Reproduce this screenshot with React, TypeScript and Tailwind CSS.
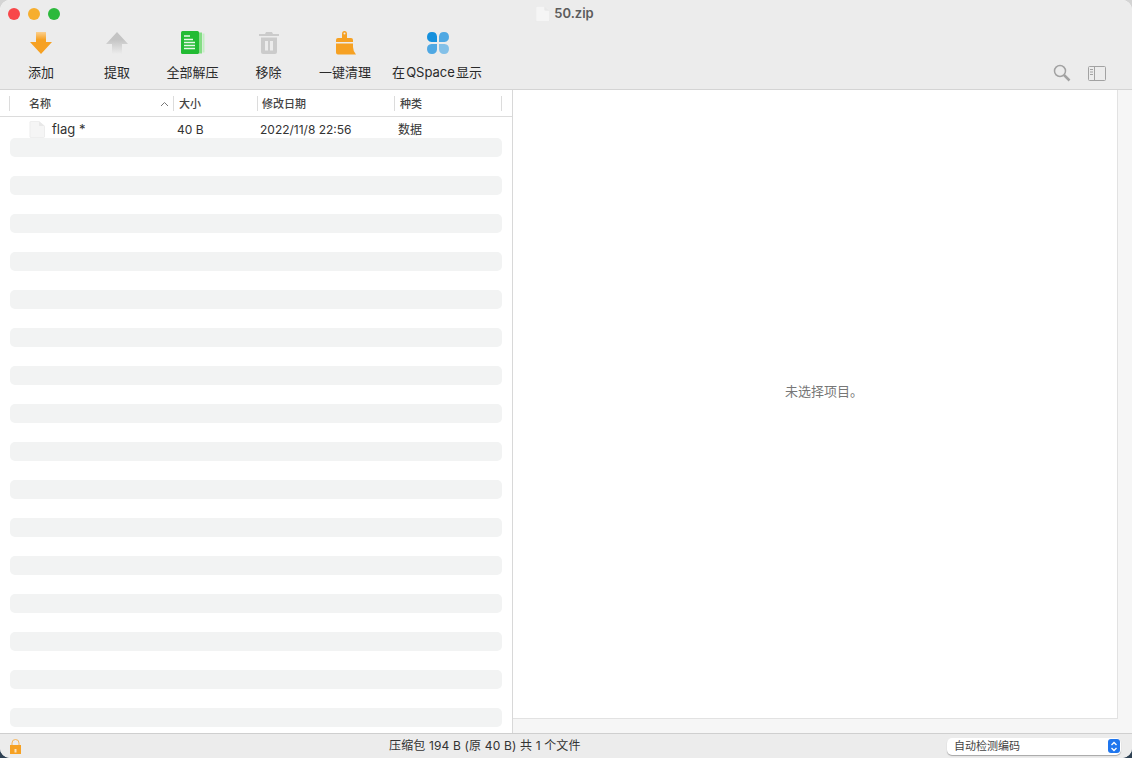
import React from 'react'

const font = { fontFamily: '"Inter", "Noto Sans CJK SC", sans-serif' }

const FileIcon = ({ className }: { className: string }) => (
  <svg className={className} viewBox="0 0 16 20" preserveAspectRatio="none">
    <path d="M1 1.500Q1 .5 2 .5H10L15.500 6V18.500Q15.500 19.500 14.500 19.500H2Q1 19.500 1 18.500Z" fill="#f5f5f5" stroke="#ebebeb" />
    <path d="M10 .5V5Q10 6 11 6H15.500Z" fill="#e8e8e8" />
  </svg>
)

const tools = [
  {
    label: '添加',
    width: 'w-[76px]',
    icon: (
      <svg className="w-6 h-6" viewBox="0 0 24 24">
        <defs>
          <linearGradient id="add" x1="0" y1="0" x2="0" y2="1">
            <stop offset="0" stopColor="#fbd08f" />
            <stop offset="0.35" stopColor="#f6a123" />
          </linearGradient>
        </defs>
        <path d="M7 1H17V11H23L12 23 1 11H7Z" fill="url(#add)" />
      </svg>
    ),
  },
  {
    label: '提取',
    width: 'w-[76px]',
    icon: (
      <svg className="w-6 h-6" viewBox="0 0 24 24">
        <defs>
          <linearGradient id="extract" x1="0" y1="0" x2="0" y2="1">
            <stop offset="0.35" stopColor="#c4c4c4" />
            <stop offset="1" stopColor="#ececec" />
          </linearGradient>
        </defs>
        <path d="M12 1 23 13H17V23H7V13H1Z" fill="url(#extract)" />
      </svg>
    ),
  },
  {
    label: '全部解压',
    width: 'w-[75px]',
    icon: (
      <svg className="w-6 h-6" viewBox="0 0 24 24">
        <rect x="21.500" y="2.500" width="2" height="19" fill="#c3eec3" />
        <rect x="18" y="1.500" width="3" height="21" fill="#84dd84" />
        <rect x="0" y="0" width="18" height="23" rx="1.500" fill="#22bb33" />
        <path d="M3 5H9M3 8.500H12M3 11.500H14M3 14.500H14M3 17.500H14" stroke="#e8f8e8" strokeWidth="1.500" />
      </svg>
    ),
  },
  {
    label: '移除',
    width: 'w-[77px]',
    icon: (
      <svg className="w-6 h-6" viewBox="0 0 24 24">
        <path d="M9 1H15L16 3H22V5H2V3H8Z" fill="#cbcbcb" />
        <path fillRule="evenodd" d="M4 6.500H20V21Q20 23 18 23H6Q4 23 4 21ZM8 10V19.500H11V10ZM13 10V19.500H16V10Z" fill="#cbcbcb" />
      </svg>
    ),
  },
  {
    label: '一键清理',
    width: 'w-[76px]',
    icon: (
      <svg className="w-6 h-6" viewBox="0 0 24 24">
        <path fillRule="evenodd" d="M9 3Q9 0 11.500 0T14 3V7H18Q20 7 20 9V11H3V9Q3 7 5 7H9ZM10.500 2.500A1 1 0 0 0 12.500 2.500A1 1 0 0 0 10.500 2.500Z" fill="#f6a123" />
        <path d="M3 12.500H20V16Q20 20 23 23.500H5Q3 23.500 3 21.500Z" fill="#f6a123" />
      </svg>
    ),
  },
  {
    label: '在 QSpace 显示',
    width: 'w-[108px]',
    icon: (
      <svg className="w-6 h-6 translate-x-[1px]" viewBox="0 0 24 24">
        <path d="M11 11H5.500A5 5 0 1 1 11 5.500Z" fill="#1590dd" />
        <path d="M13 11H18.500A5 5 0 1 0 13 5.500Z" fill="#4fa8e3" />
        <path d="M11 13H5.500A5 5 0 1 0 11 18.500Z" fill="#4fa8e3" />
        <path d="M13 13H18.500A5 5 0 1 1 13 18.500Z" fill="#83c0e8" />
      </svg>
    ),
  },
]

export default function App() {
  return (
    <div className="w-[1132px] h-[758px] bg-linear-to-b from-[#d4d4d4] from-50% to-[#2f4254] to-50% overflow-hidden" style={font}>
      <div className="h-full flex flex-col rounded-[10px] overflow-hidden bg-white">
        {/* title bar and toolbar */}
        <div className="h-[90px] shrink-0 bg-[#ececec] border-b border-[#d4d4d4]">
          <div className="h-[28px] relative flex items-center justify-center pr-[3px]">
            <div className="absolute left-2 top-2 flex gap-2">
              <span className="w-3 h-3 rounded-full bg-[#f8474a]" />
              <span className="w-3 h-3 rounded-full bg-[#f6ae2e]" />
              <span className="w-3 h-3 rounded-full bg-[#2cb93c]" />
            </div>
            <div className="flex items-center gap-[4px] text-[13px] font-semibold text-[#5c5c5c]">
              <FileIcon className="w-[15px] h-[16px]" />
              <span>50.zip</span>
            </div>
          </div>
          <div className="flex items-start pl-[3px] pr-[26px] h-[61px]">
            {tools.map(t => (
              <div key={t.label} className={`${t.width} flex flex-col items-center pt-[3px]`}>
                {t.icon}
                <span className="mt-[8px] text-[13px] leading-[18px] text-[#2a2a2a] whitespace-nowrap [word-spacing:-2.5px]">{t.label}</span>
              </div>
            ))}
            <div className="ml-auto flex items-center gap-[17px] pt-[36px]">
              <svg className="w-[18px] h-[18px]" viewBox="0 0 18 18" fill="none" stroke="#a2a2a2">
                <circle cx="7" cy="7" r="5.500" strokeWidth="1.500" />
                <path d="M11 11 16.500 16.500" strokeWidth="2.500" />
              </svg>
              <svg className="w-[18px] h-[15px]" viewBox="0 0 18 15" fill="none" stroke="#a2a2a2">
                <rect x=".5" y=".5" width="17" height="14" rx="1" />
                <path d="M6.500 .5V14.500" />
                <path d="M2 3.500H5M2 6H5M2 8.500H5" />
              </svg>
            </div>
          </div>
        </div>

        <div className="flex-1 min-h-0 flex">
          {/* file list */}
          <div className="w-[513px] shrink-0 border-r border-[#d8d8d8] bg-white">
            <div className="h-[27px] border-b border-[#dcdcdc] flex items-center text-[11px] font-medium text-[#444]">
              <div className="w-[174px] h-[15px] pt-[2px] ml-[9px] -mr-[9px] border-l border-[#dcdcdc] flex items-center justify-between pl-[19px] pr-[14px]">
                <span>名称</span>
                <svg className="w-[9px] h-[6px]" viewBox="0 0 9 6" fill="none" stroke="#777">
                  <path d="M1 5 4.500 1.500 8 5" />
                </svg>
              </div>
              <div className="w-[84px] ml-[-1px] h-[15px] pt-[2px] border-l border-[#dcdcdc] flex items-center pl-[5px]">大小</div>
              <div className="w-[137px] h-[15px] pt-[2px] border-l border-[#dcdcdc] flex items-center pl-[4px]">修改日期</div>
              <div className="w-[108px] h-[15px] pt-[2px] border-x border-[#dcdcdc] flex items-center pl-[5px]">种类</div>
            </div>
            <div className="h-[21px] pt-[4px] flex items-center text-[12px] text-[#333]">
              <div className="w-[177px] flex items-center pl-[29px] gap-[7px]">
                <FileIcon className="w-[16px] h-[17px]" />
                <span className="text-[13px]">flag *</span>
              </div>
              <span className="w-[83px]">40 B</span>
              <span className="w-[138px]">2022/11/8 22:56</span>
              <span>数据</span>
            </div>
            <div className="flex flex-col gap-[19px] px-[10px]">
              {[...Array(16)].map((_, i) => (
                <div key={i} className="h-[19px] rounded-[5px] bg-[#f2f3f3]" />
              ))}
            </div>
          </div>

          {/* preview pane */}
          <div className="flex-1 bg-[#f6f6f6] pr-[14px] pb-[14px]">
            <div className="h-full bg-white border-r border-b border-[#e2e2e2] flex items-center justify-center text-[13px] text-[#777] pl-[18px] pb-[24px]">
              未选择项目。
            </div>
          </div>
        </div>

        {/* status bar */}
        <div className="h-[25px] shrink-0 bg-[#ececec] border-t border-[#cfcfcf] flex items-center pl-[10px] pr-[11px]">
          <svg className="w-[11px] h-[15px]" viewBox="0 0 11 15" fill="none">
            <path d="M2 7V4A3.500 3.500 0 0 1 9 4V7" stroke="#f6b55a" strokeWidth="1" />
            <rect x="0" y="6" width="11" height="9" fill="#f6a123" />
            <rect x="4.500" y="10" width="2" height="3.500" fill="#fbe2bd" />
          </svg>
          <span className="ml-[368px] text-[12px] tracking-[0.15px] text-[#333] whitespace-nowrap">压缩包 194 B (原 40 B) 共 1 个文件</span>
          <div className="ml-auto w-[174px] h-[17px] rounded-[5px] bg-white shadow-[0_1px_1px_rgba(0,0,0,0.3)] flex items-center justify-between pl-[7px] pr-[1px] text-[11px] text-[#444]">
            <span>自动检测编码</span>
            <span className="w-[12px] h-[14px] rounded-[3px] bg-[#1f76ee] flex items-center justify-center">
              <svg className="w-[8px] h-[11px]" viewBox="0 0 8 11" fill="none" stroke="#fff" strokeWidth="1.300">
                <path d="M1.500 4 4 1.500 6.500 4M1.500 7 4 9.500 6.500 7" />
              </svg>
            </span>
          </div>
        </div>
      </div>
    </div>
  )
}
